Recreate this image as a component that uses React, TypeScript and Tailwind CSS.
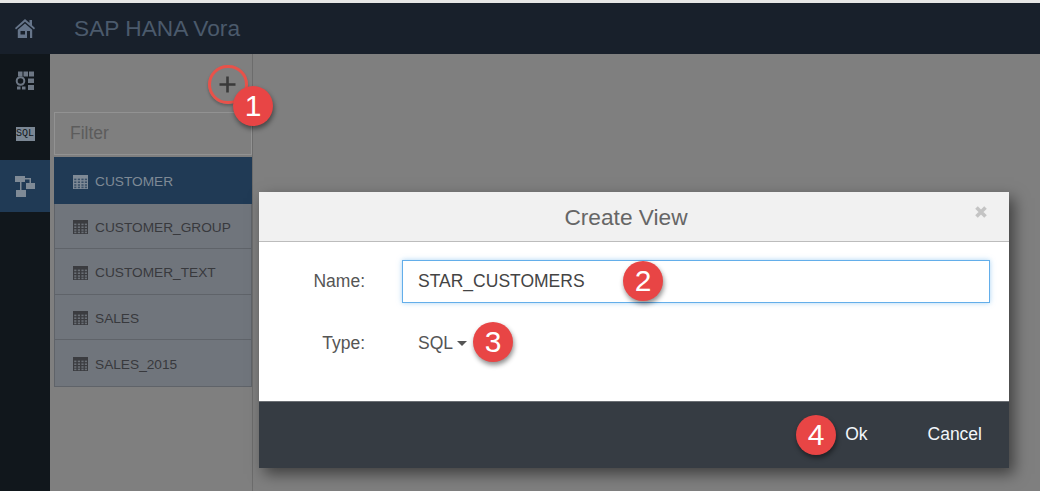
import React from "react";

const font = { fontFamily: '"Liberation Sans", Arial, sans-serif' };

function TableIcon({ color, cell }: { color: string; cell: string }) {
  return (
    <svg width="15" height="14" viewBox="0 0 15 14" className="mr-[7px] mt-[-2px] shrink-0">
      <rect x="0" y="0" width="15" height="14" fill={color} />
      <g fill={cell}>
        {[1.2, 4.8, 8.4, 11.8].map((x) =>
          [3.6, 6.4, 9.2, 11.6].map((y) => (
            <rect key={`${x}-${y}`} x={x} y={y} width="2.2" height="1.6" />
          ))
        )}
      </g>
    </svg>
  );
}

function Badge({ n, className }: { n: string; className: string }) {
  return (
    <div
      className={`absolute flex h-10 w-10 items-center justify-center rounded-full bg-[#e84545] text-[30px] leading-none text-white shadow-[1px_3px_5px_rgba(0,0,0,0.45)] ${className}`}
    >
      {n}
    </div>
  );
}

const items = [
  { name: "CUSTOMER_GROUP", h: "h-[45px]" },
  { name: "CUSTOMER_TEXT", h: "h-[46px]" },
  { name: "SALES", h: "h-[45px]" },
  { name: "SALES_2015", h: "h-[46px]" },
];

export default function App() {
  return (
    <div style={font} className="relative flex h-[491px] w-[1040px] flex-col overflow-hidden bg-[#7f7f7f]">
      <div className="h-[3px] shrink-0 bg-[#e6e6e6]" />
      <header className="flex h-[51px] shrink-0 items-center bg-[#18202b]">
        <div className="flex w-[50px] justify-center">
          <svg width="22" height="21" viewBox="0 0 22 21" className="text-[#66758a]">
            <path fill="currentColor" d="M11 1 L1 10 L2 11.5 L11 3.8 L20 11.5 L21 10 L18 7.3 V2 H15.5 V5 Z" />
            <path fill="currentColor" fillRule="evenodd" d="M11 5.5 L3.8 11.7 V20 H18.2 V11.7 Z M6.5 13 H11 V16.5 H6.5 Z M13 13 H16 V20 H13 Z" />
          </svg>
        </div>
        <div className="ml-6 text-[22.7px] text-[#4b5a6c]">SAP HANA Vora</div>
      </header>

      <div className="flex min-h-0 flex-1">
        <nav className="flex w-[50px] shrink-0 flex-col bg-[#11171c]">
          <div className="flex h-[53px] items-center justify-center">
            <svg width="20" height="20" viewBox="0 0 20 20" className="text-[#6d7784]">
              <g fill="currentColor">
                <rect x="3" y="0.5" width="4.5" height="5" />
                <rect x="8.5" y="0.5" width="4.5" height="5" />
                <rect x="14" y="0.5" width="5" height="5" />
                <rect x="13" y="7.5" width="6" height="4.5" />
                <rect x="13" y="14" width="6" height="5" />
                <rect x="2" y="15.5" width="3.5" height="3" />
                <rect x="7" y="15.5" width="3.5" height="3" />
              </g>
              <circle cx="5.5" cy="10" r="3.8" fill="none" stroke="currentColor" strokeWidth="2" />
            </svg>
          </div>
          <div className="flex h-[53px] items-center justify-center">
            <div className="flex h-[14px] w-[19px] items-center justify-center bg-[#7b8794] font-['Liberation_Mono'] text-[10px] leading-none text-[#11171c]">
              SQL
            </div>
          </div>
          <div className="flex h-[52px] items-center justify-center bg-[#203a55]">
            <svg width="20" height="21" viewBox="0 0 20 21" className="text-[#7f8a96]">
              <g fill="currentColor">
                <rect x="0" y="0" width="10" height="6" />
                <rect x="11" y="7" width="9" height="6" />
                <rect x="1" y="14" width="10" height="7" />
                <rect x="5" y="6" width="1.5" height="8" />
                <rect x="10" y="2" width="6" height="1.5" />
                <rect x="14.5" y="2" width="1.5" height="5" />
              </g>
            </svg>
          </div>
        </nav>

        <aside className="flex w-[203px] shrink-0 flex-col border-r border-[#6c6c6c] bg-[#7f7f7f] pl-1">
          <div className="flex h-[58px] items-center justify-end pr-[16px] pt-[2px]">
            <svg width="17" height="17" viewBox="0 0 17 17">
              <path d="M8.5 0.5 V16.5 M0.5 8.5 H16.5" stroke="#3a3a3a" strokeWidth="2.6" />
            </svg>
          </div>
          <div className="flex h-[43px] items-center border border-[#929292] pl-[15px] text-[17.5px] text-[#5c5c5c]">Filter</div>
          <div className="mt-[2px] flex h-[47px] items-center bg-[#203a55] pl-[19px] pt-[4px] text-[13.7px] text-[#7f8a96]">
            <TableIcon color="#7f8a96" cell="#3a5068" />
            CUSTOMER
          </div>
          <div className="border-x border-b border-[#5f6369] bg-[#70757c]">
            {items.map((it, i) => (
              <div
                key={it.name}
                className={`flex items-center pl-[18px] pt-[4px] text-[13.7px] text-[#38393d] ${it.h} ${i < items.length - 1 ? "border-b border-[#5f6369]" : ""}`}
              >
                <TableIcon color="#3b3c40" cell="#6a6f76" />
                {it.name}
              </div>
            ))}
          </div>
        </aside>
      </div>

      {/* ring round the add button */}
      <div className="absolute left-[208px] top-[65px] h-[39px] w-[40px] rounded-full border-[3px] border-[#e8524a] shadow-[0_2px_3px_rgba(0,0,0,0.25)]" />

      {/* dialog */}
      <div className="absolute left-[259px] top-[192px] flex h-[276px] w-[750px] flex-col shadow-[5px_6px_14px_rgba(0,0,0,0.5)]">
        <div className="relative flex h-[50px] shrink-0 items-center justify-center border-b border-[#bcbcbc] bg-[#f1f1f1] pr-[16px] pt-[2px] text-[22.7px] text-[#666666]">
          Create View
          <svg width="12" height="12" viewBox="0 0 12 12" className="absolute right-[22px] top-[14px]">
            <path d="M1.5 1.5 L10.5 10.5 M10.5 1.5 L1.5 10.5" stroke="#c4c4c4" strokeWidth="3.6" />
          </svg>
        </div>
        <div className="flex h-[159px] shrink-0 flex-col bg-white text-[17.5px] text-[#555555]">
          <div className="mt-[18px] flex items-center">
            <div className="w-[106px] text-right">Name:</div>
            <div className="ml-[37px] flex h-[43px] w-[588px] items-center border border-[#63aeea] pl-[15px] text-[#444444] shadow-[0_0_5px_rgba(99,174,234,0.55)]">
              STAR_CUSTOMERS
            </div>
          </div>
          <div className="mt-[27px] flex items-center">
            <div className="w-[106px] text-right">Type:</div>
            <div className="ml-[53px] flex items-center">
              SQL
              <span className="ml-[4px] mt-[1px] h-0 w-0 border-x-[5px] border-t-[5px] border-x-transparent border-t-[#555555]" />
            </div>
          </div>
        </div>
        <div className="flex flex-1 items-center justify-end border-t border-[#6b6f74] bg-[#363c43] pb-[2px] pr-[27px] text-[17.5px] text-[#f2f6fa]">
          <span>Ok</span>
          <span className="ml-[60px]">Cancel</span>
        </div>
      </div>

      <Badge n="1" className="left-[233px] top-[86px]" />
      <Badge n="2" className="left-[623px] top-[261px]" />
      <Badge n="3" className="left-[473px] top-[322px]" />
      <Badge n="4" className="left-[796px] top-[415px]" />
    </div>
  );
}
